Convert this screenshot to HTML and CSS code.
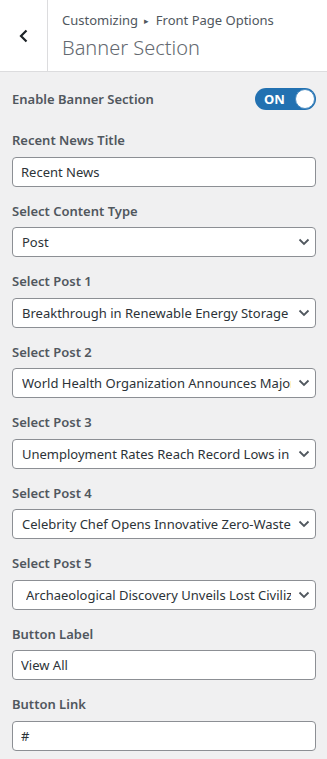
FILE: index.html
```html
<!DOCTYPE html>
<html lang="en">
<head>
  <meta charset="UTF-8" />
  <meta name="viewport" content="width=device-width, initial-scale=1.0"/>
  <title>Banner Section</title>
  <link rel="stylesheet" href="styles.css">
</head>
<body>
  <div class="header">
    <button class="back" aria-label="Back">
      <svg width="12" height="14" viewBox="0 0 12 14"><path d="M8.5 1.5 3 7l5.5 5.5" fill="none" stroke="#1d2327" stroke-width="2.2"/></svg>
    </button>
    <div class="title">
      <div class="crumbs">Customizing <span class="sep">&#9656;</span> Front Page Options</div>
      <div class="section">Banner Section</div>
    </div>
  </div>

  <div class="controls">
    <div class="control toggle-row">
      <span class="control-title">Enable Banner Section</span>
      <span class="toggle"><span class="toggle-text">ON</span><span class="knob"></span></span>
    </div>

    <div class="control">
      <label class="control-title" for="news">Recent News Title</label>
      <input type="text" id="news" value="Recent News"/>
    </div>

    <div class="control">
      <label class="control-title" for="ctype">Select Content Type</label>
      <div class="select-wrap">
        <select id="ctype"><option>Post</option></select>
        <svg class="chev" width="12" height="8" viewBox="0 0 12 8"><path d="M1.5 1.5 6 6l4.5-4.5" fill="none" stroke="#50575e" stroke-width="1.8"/></svg>
      </div>
    </div>

    <div class="control">
      <label class="control-title" for="p1">Select Post 1</label>
      <div class="select-wrap">
        <select id="p1"><option>Breakthrough in Renewable Energy Storage</option></select>
        <svg class="chev" width="12" height="8" viewBox="0 0 12 8"><path d="M1.5 1.5 6 6l4.5-4.5" fill="none" stroke="#50575e" stroke-width="1.8"/></svg>
      </div>
    </div>

    <div class="control">
      <label class="control-title" for="p2">Select Post 2</label>
      <div class="select-wrap">
        <select id="p2"><option>World Health Organization Announces Major</option></select>
        <svg class="chev" width="12" height="8" viewBox="0 0 12 8"><path d="M1.5 1.5 6 6l4.5-4.5" fill="none" stroke="#50575e" stroke-width="1.8"/></svg>
      </div>
    </div>

    <div class="control">
      <label class="control-title" for="p3">Select Post 3</label>
      <div class="select-wrap">
        <select id="p3"><option>Unemployment Rates Reach Record Lows in</option></select>
        <svg class="chev" width="12" height="8" viewBox="0 0 12 8"><path d="M1.5 1.5 6 6l4.5-4.5" fill="none" stroke="#50575e" stroke-width="1.8"/></svg>
      </div>
    </div>

    <div class="control">
      <label class="control-title" for="p4">Select Post 4</label>
      <div class="select-wrap">
        <select id="p4"><option>Celebrity Chef Opens Innovative Zero-Waste</option></select>
        <svg class="chev" width="12" height="8" viewBox="0 0 12 8"><path d="M1.5 1.5 6 6l4.5-4.5" fill="none" stroke="#50575e" stroke-width="1.8"/></svg>
      </div>
    </div>

    <div class="control">
      <label class="control-title" for="p5">Select Post 5</label>
      <div class="select-wrap">
        <select id="p5" class="indent"><option>Archaeological Discovery Unveils Lost Civilization</option></select>
        <svg class="chev" width="12" height="8" viewBox="0 0 12 8"><path d="M1.5 1.5 6 6l4.5-4.5" fill="none" stroke="#50575e" stroke-width="1.8"/></svg>
      </div>
    </div>

    <div class="control">
      <label class="control-title" for="blabel">Button Label</label>
      <input type="text" id="blabel" value="View All"/>
    </div>

    <div class="control">
      <label class="control-title" for="blink">Button Link</label>
      <input type="text" id="blink" value="#"/>
    </div>
  </div>
</body>
</html>
```

FILE: styles.css
```css
body {
  margin: 0;
  font-family: "Noto Sans", Arial, sans-serif;
  font-size: 13px;
  background: #f0f0f1;
  color: #50575e;
}
.header {
  display: flex;
  height: 71px;
  background: white;
  border-bottom: 1px solid #dcdcde;
}
.back {
  width: 48px;
  border: 0;
  border-right: 1px solid #dcdcde;
  background: white;
  padding: 0;
  display: flex;
  align-items: center;
  justify-content: center;
}
.title {
  padding: 10px 0 0 14px;
}
.crumbs {
  font-size: 13px;
  line-height: 20px;
  color: #50575e;
}
.sep {
  font-size: 9px;
  vertical-align: 1px;
  margin: 0 3px;
}
.section {
  font-size: 20px;
  font-weight: 300;
  line-height: 34px;
  color: #646970;
}
.controls {
  padding: 15px 11px 0 12px;
}
.control {
  margin-bottom: 12px;
}
.control-title {
  display: block;
  font-size: 13px;
  font-weight: 600;
  line-height: 24.5px;
  margin-bottom: 4px;
}
.toggle-row {
  display: flex;
  justify-content: space-between;
  height: 29px;
  align-items: flex-start;
}
.toggle-row .control-title {
  margin: 0;
}
.toggle {
  display: flex;
  align-items: center;
  justify-content: space-between;
  width: 61px;
  height: 22px;
  margin: 1px 0 0;
  border-radius: 11px;
  background: #2271b1;
  box-sizing: border-box;
  padding: 0 1px 0 9px;
}
.toggle-text {
  color: white;
  font-size: 13px;
  font-weight: 700;
}
.knob {
  width: 18px;
  height: 18px;
  border-radius: 50%;
  background: white;
  border: 1px solid #4a8cc2;
}
input, select {
  display: block;
  width: 100%;
  height: 30px;
  box-sizing: border-box;
  margin: 0;
  border: 1px solid #8c8f94;
  border-radius: 4px;
  background: white;
  font-family: inherit;
  font-size: 13px;
  color: #2c3338;
  padding: 0 8px;
}
.select-wrap {
  position: relative;
}
select {
  appearance: none;
  -webkit-appearance: none;
  padding: 0 24px 0 9px;
}
select.indent {
  padding-left: 13px;
}
.chev {
  position: absolute;
  right: 6px;
  top: 11px;
  pointer-events: none;
}
```
